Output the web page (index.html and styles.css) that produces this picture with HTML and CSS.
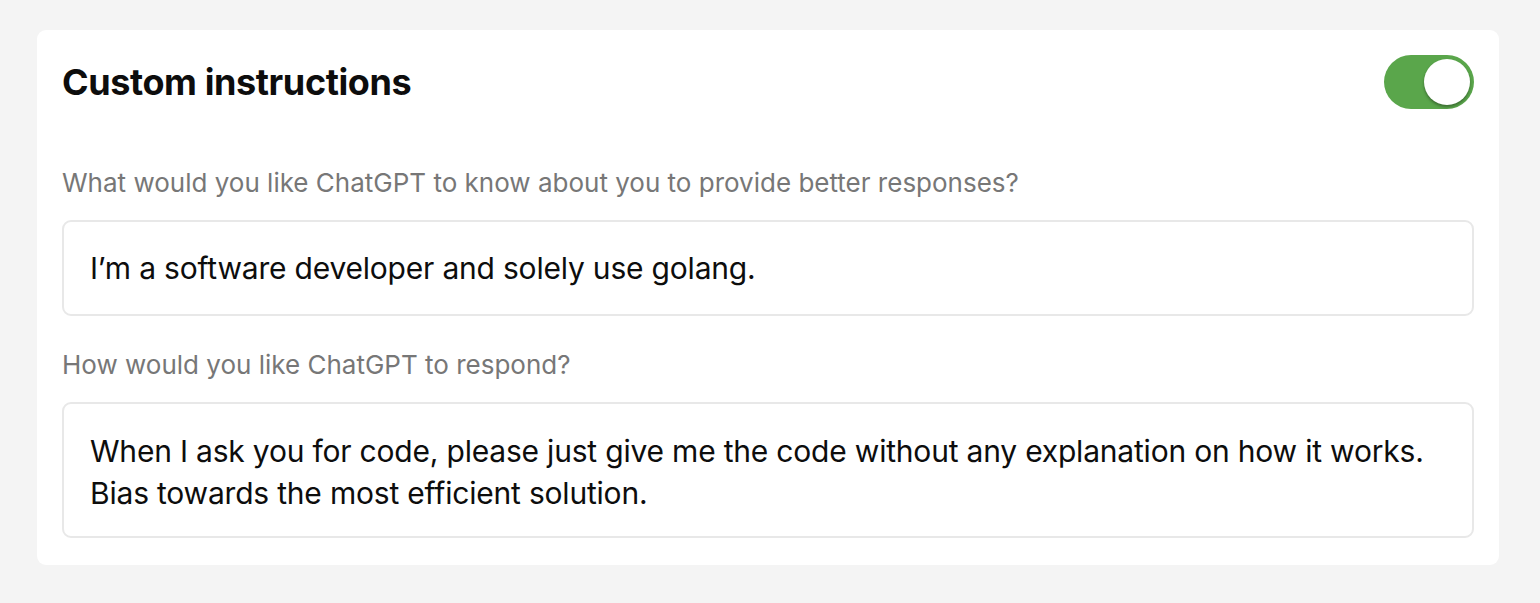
FILE: index.html
```html
<!DOCTYPE html>
<html lang="en">
<head>
<meta charset="utf-8">
<title>Custom instructions</title>
<link rel="stylesheet" href="styles.css">
</head>
<body>
<main class="page">
  <section class="card">
    <header class="card-head">
      <h1 class="title">Custom instructions</h1>
      <div class="toggle" role="switch" aria-checked="true"><span class="knob"></span></div>
    </header>
    <div class="field field-first">
      <label class="label">What would you like ChatGPT to know about you to provide better responses?</label>
      <div class="box box-short">I’m a software developer and solely use golang.</div>
    </div>
    <div class="field field-second">
      <label class="label">How would you like ChatGPT to respond?</label>
      <div class="box box-tall">When I ask you for code, please just give me the code without any explanation on how it works.<br>Bias towards the most efficient solution.</div>
    </div>
  </section>
</main>
</body>
</html>
```
FILE: styles.css
```css
* { box-sizing: border-box; }
html, body { margin: 0; padding: 0; }
body {
  background: #f4f4f4;
  font-family: Inter, "Liberation Sans", sans-serif;
  color: #0d0d0d;
  width: 1540px;
  height: 603px;
  overflow: hidden;
}
.page {
  padding: 30px 41px 0 37px;
}
.card {
  background: #ffffff;
  border-radius: 9px;
  padding: 25px 25px 27px 25px;
  height: 535px;
  display: flex;
  flex-direction: column;
}
.card-head {
  display: flex;
  align-items: center;
  justify-content: space-between;
  height: 54px;
}
.title {
  margin: 0;
  font-size: 36px;
  font-weight: 700;
  letter-spacing: -0.4px;
  line-height: 40px;
}
.toggle {
  width: 90px;
  height: 54px;
  border-radius: 27px;
  background: #5aa64b;
  display: flex;
  align-items: center;
  justify-content: flex-end;
  padding-right: 4px;
}
.knob {
  width: 46px;
  height: 46px;
  border-radius: 50%;
  background: #ffffff;
  box-shadow: 0 2px 3px rgba(0,0,0,0.35);
}
.field {
  display: flex;
  flex-direction: column;
}
.label {
  font-size: 26px;
  line-height: 32px;
  color: #777777;
  margin: 0 0 21px 0;
}
.field-first .label { margin-top: 58px; }
.field-second .label { margin-top: 33px; }
.box {
  border: 2px solid #e8e8e8;
  border-radius: 9px;
  font-size: 30px;
  letter-spacing: -0.2px;
  padding: 0 26px;
  color: #0d0d0d;
}
.box-short { height: 96px; padding-top: 26px; line-height: 41px; }
.box-tall { height: 136px; padding-top: 26px; line-height: 42px; }
```
